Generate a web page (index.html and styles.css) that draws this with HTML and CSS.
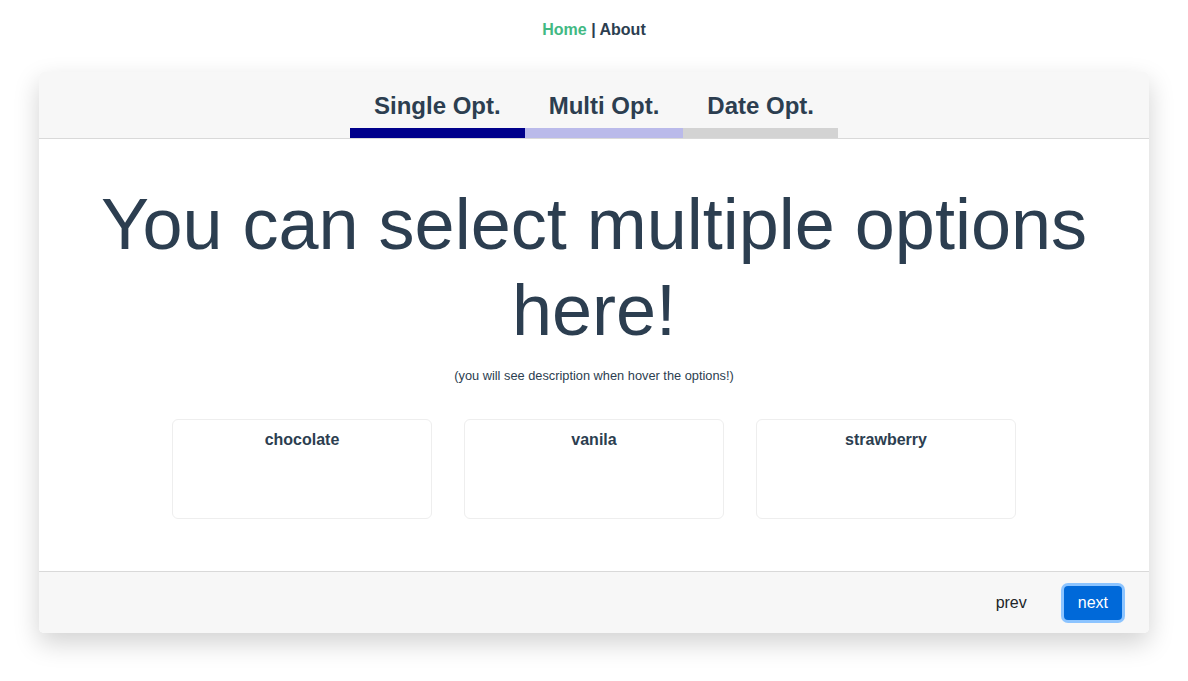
FILE: index.html
```html
<!DOCTYPE html>
<html>
<head>
<meta charset="utf-8">
<link rel="stylesheet" href="styles.css">
</head>
<body>
<div class="app">
  <nav class="nav"><a class="nav-link active">Home</a> | <a class="nav-link">About</a></nav>
  <div class="wizard">
    <div class="wizard-head">
      <div class="tabs">
        <div class="tab tab-done">Single Opt.</div>
        <div class="tab tab-current">Multi Opt.</div>
        <div class="tab tab-todo">Date Opt.</div>
      </div>
    </div>
    <div class="wizard-body">
      <h1 class="title">You can select multiple options here!</h1>
      <p class="subtitle">(you will see description when hover the options!)</p>
      <div class="options">
        <div class="option"><div class="option-name">chocolate</div></div>
        <div class="option"><div class="option-name">vanila</div></div>
        <div class="option"><div class="option-name">strawberry</div></div>
      </div>
    </div>
    <div class="wizard-foot">
      <button class="btn btn-prev">prev</button>
      <button class="btn btn-next">next</button>
    </div>
  </div>
</div>
</body>
</html>
```
FILE: styles.css
```css
* { box-sizing: border-box; }
html, body { margin: 0; padding: 0; background: #fff; }
body { font-family: "Liberation Sans", Arial, sans-serif; color: #2c3e50; padding-bottom: 40px; }
.app { padding: 0 39px; }
.nav { text-align: center; padding-top: 21px; height: 72px; font-size: 16px; font-weight: bold; color: #2c3e50; }
.nav-link { color: #2c3e50; }
.nav-link.active { color: #42b983; }
.wizard { background: #fff; border-radius: 5px; box-shadow: 0 10px 26px rgba(0,0,0,0.18); overflow: hidden; }
.wizard-head { background: #f7f7f7; border-bottom: 1px solid #d9d9d9; height: 67px; display: flex; justify-content: center; align-items: flex-end; }
.tabs { display: flex; }
.tab { font-size: 24px; font-weight: bold; padding: 0 24px 8px; border-bottom: 10px solid #d3d3d3; line-height: 28px; }
.tab-done { border-bottom-color: #00008b; }
.tab-current { border-bottom-color: #babaea; }
.tab-todo { border-bottom-color: #d3d3d3; }
.wizard-body { height: 432px; padding-top: 42px; text-align: center; }
.title { font-size: 72px; font-weight: normal; line-height: 86px; margin: 0 auto; }
.subtitle { font-size: 12.8px; margin: 15px 0 0; color: #2c3e50; }
.options { display: flex; justify-content: center; gap: 32px; margin-top: 36px; }
.option { width: 260px; height: 100px; border: 1px solid #eeeeee; border-radius: 6px; padding-top: 11px; }
.option-name { font-size: 16px; font-weight: bold; }
.wizard-foot { background: #f7f7f7; border-top: 1px solid #d9d9d9; height: 62px; display: flex; justify-content: flex-end; align-items: center; padding-right: 27px; gap: 25px; }
.btn { font-family: "Liberation Sans", Arial, sans-serif; font-size: 16px; border: none; background: transparent; color: #212529; padding: 0 12px; height: 34px; border-radius: 4px; }
.btn-next { background: #0069d9; color: #fff; padding: 0 14px; box-shadow: 0 0 0 3px #8cc4ff; }
```
